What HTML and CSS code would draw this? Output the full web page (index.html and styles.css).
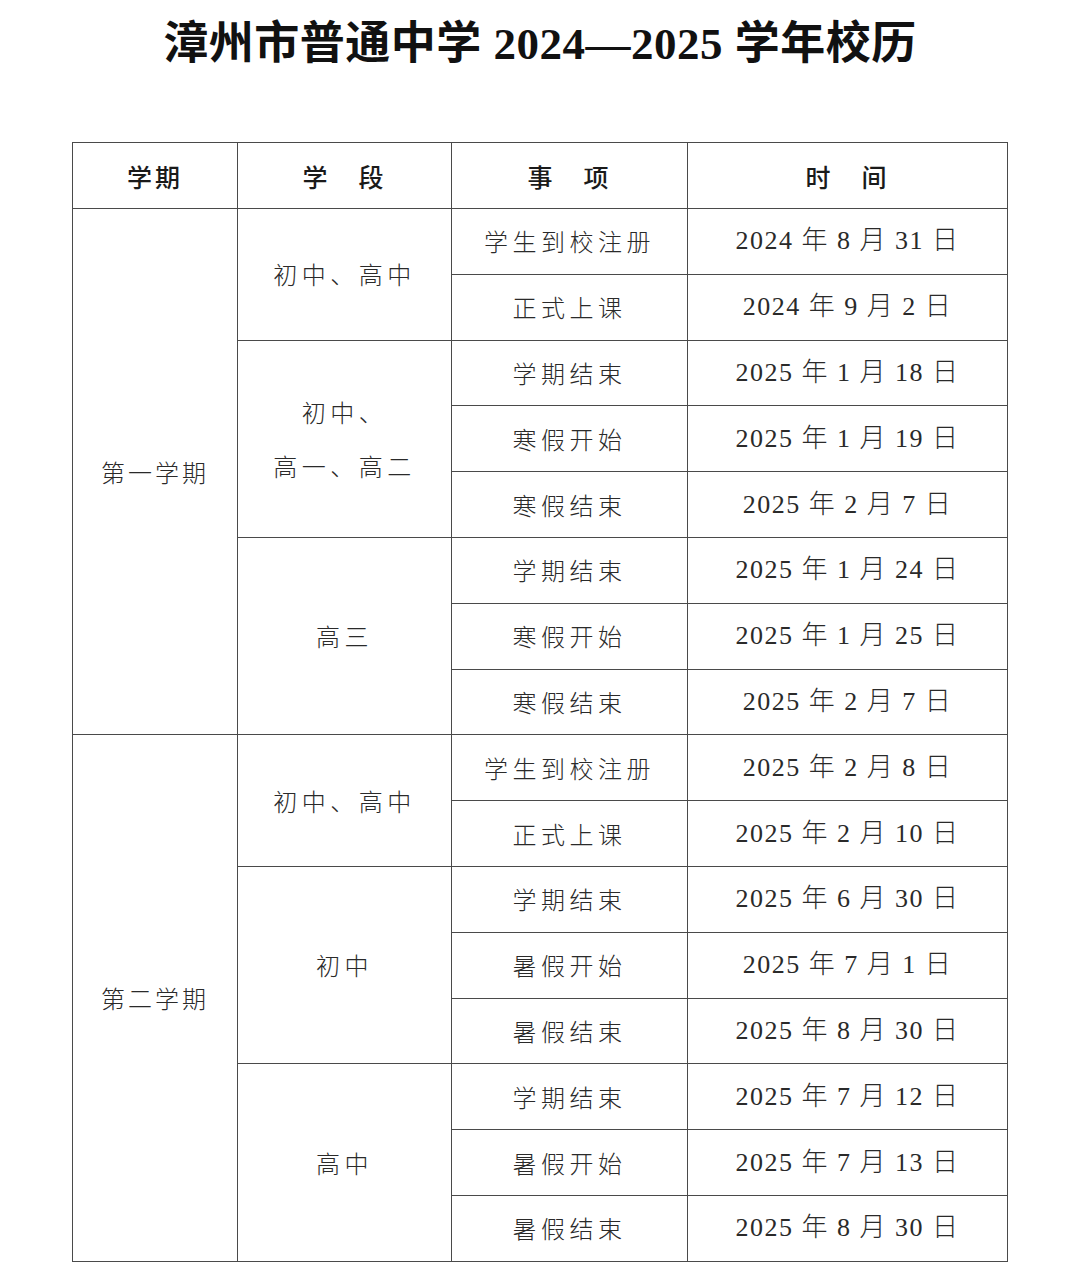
FILE: index.html
```html
<!DOCTYPE html>
<html lang="zh-CN">
<head>
<meta charset="utf-8">
<title>漳州市普通中学2024—2025学年校历</title>
<link rel="stylesheet" href="styles.css">
</head>
<body>
<h1 class="title">漳州市普通中学 2024—2025 学年校历</h1>
<table class="cal">
  <colgroup>
    <col class="c1"><col class="c2"><col class="c3"><col class="c4">
  </colgroup>
  <thead>
    <tr><th>学期</th><th>学&emsp;段</th><th>事&emsp;项</th><th>时&emsp;间</th></tr>
  </thead>
  <tbody>
    <tr><td rowspan="8" class="term">第一学期</td><td rowspan="2">初中、高中</td><td>学生到校注册</td><td class="date">2024 年 8 月 31 日</td></tr>
    <tr><td>正式上课</td><td class="date">2024 年 9 月 2 日</td></tr>
    <tr><td rowspan="3" class="multi">初中、<br>高一、高二</td><td>学期结束</td><td class="date">2025 年 1 月 18 日</td></tr>
    <tr><td>寒假开始</td><td class="date">2025 年 1 月 19 日</td></tr>
    <tr><td>寒假结束</td><td class="date">2025 年 2 月 7 日</td></tr>
    <tr><td rowspan="3">高三</td><td>学期结束</td><td class="date">2025 年 1 月 24 日</td></tr>
    <tr><td>寒假开始</td><td class="date">2025 年 1 月 25 日</td></tr>
    <tr><td>寒假结束</td><td class="date">2025 年 2 月 7 日</td></tr>
    <tr><td rowspan="8" class="term">第二学期</td><td rowspan="2">初中、高中</td><td>学生到校注册</td><td class="date">2025 年 2 月 8 日</td></tr>
    <tr><td>正式上课</td><td class="date">2025 年 2 月 10 日</td></tr>
    <tr><td rowspan="3">初中</td><td>学期结束</td><td class="date">2025 年 6 月 30 日</td></tr>
    <tr><td>暑假开始</td><td class="date">2025 年 7 月 1 日</td></tr>
    <tr><td>暑假结束</td><td class="date">2025 年 8 月 30 日</td></tr>
    <tr><td rowspan="3">高中</td><td>学期结束</td><td class="date">2025 年 7 月 12 日</td></tr>
    <tr><td>暑假开始</td><td class="date">2025 年 7 月 13 日</td></tr>
    <tr><td>暑假结束</td><td class="date">2025 年 8 月 30 日</td></tr>
  </tbody>
</table>
</body>
</html>
```
FILE: styles.css
```css
html, body {
  margin: 0;
  padding: 0;
  background: #ffffff;
}
body {
  font-family: "Liberation Serif", "Noto Sans CJK SC", serif;
  color: #222;
}
.title {
  margin: 0;
  padding-top: 18px;
  height: 142px;
  box-sizing: border-box;
  text-align: center;
  font-size: 45px;
  line-height: 52px;
  font-weight: 700;
  color: #111;
  letter-spacing: 0.5px;
}
.cal {
  margin-left: 72px;
  width: 935px;
  border-collapse: collapse;
  table-layout: fixed;
}
.c1 { width: 165px; }
.c2 { width: 214px; }
.c3 { width: 236px; }
.c4 { width: 320px; }
.cal th, .cal td {
  border: 1px solid #4a4a4a;
  text-align: center;
  vertical-align: middle;
  padding: 0;
  box-sizing: border-box;
}
.cal th {
  height: 66px;
  font-family: "Noto Sans CJK SC", sans-serif;
  font-weight: 500;
  font-size: 25px;
  color: #1a1a1a;
  letter-spacing: 3px;
}
.cal td {
  height: 65.8px;
  font-family: "Noto Sans CJK SC", sans-serif;
  font-weight: 300;
  font-size: 24px;
  letter-spacing: 4.5px;
  color: #2a2a2a;
  line-height: 54px;
}
.cal td.term {
  letter-spacing: 3px;
}
.cal td.date {
  font-family: "Liberation Serif", "Noto Sans CJK SC", serif;
  font-size: 26px;
  letter-spacing: 1.5px;
}
```
